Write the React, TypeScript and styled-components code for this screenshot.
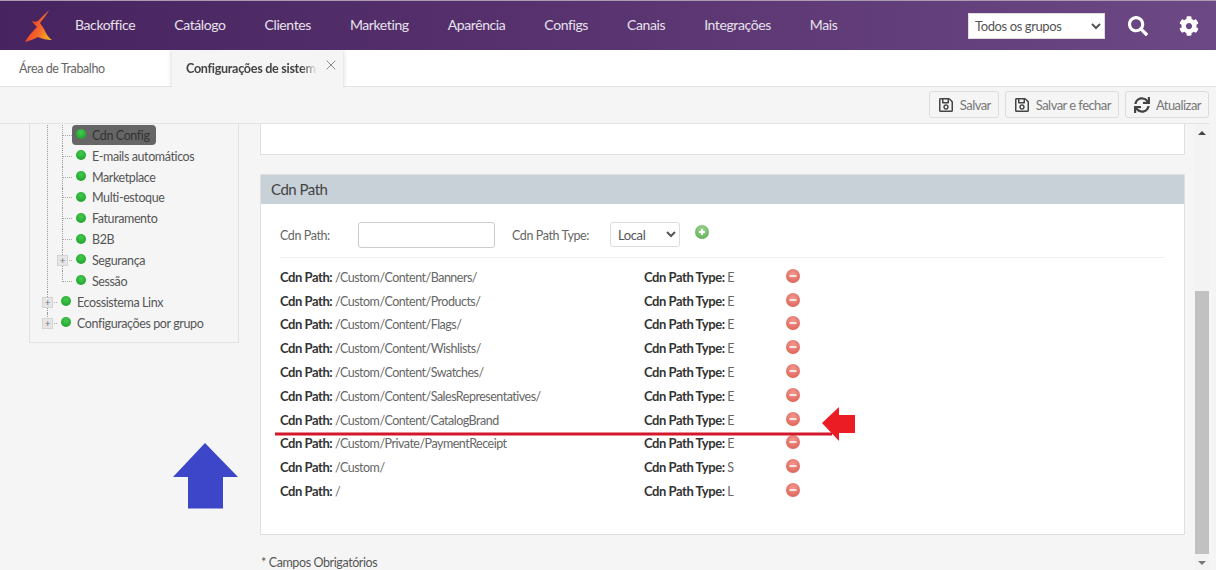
import React from "react";
import styled, { createGlobalStyle } from "styled-components";
import { FaRegSave, FaSync, FaSearch, FaCog } from "react-icons/fa";
import { X } from "lucide-react";

const FONT = `"Lato", "Noto Sans", "Liberation Sans", sans-serif`;

const Global = createGlobalStyle`
  html, body { margin: 0; padding: 0; height: 570px; overflow: hidden; background: #f5f5f5; }
  * { box-sizing: border-box; }
  body { font-family: ${FONT}; font-size: 12.5px; color: #555; }
  body, select, button { letter-spacing: -0.4px; }
`;

const Page = styled.div`
  position: relative;
  width: 1216px;
  height: 570px;
  overflow: hidden;
  display: flex;
  flex-direction: column;
  background: #f5f5f5;
`;

const Header = styled.header`
  height: 50px;
  flex: none;
  display: flex;
  align-items: center;
  padding: 0 17px 0 24px;
  border-top: 1px solid #a99bb4;
  background: linear-gradient(90deg, #47245f 0%, #55306c 40%, #6c4884 100%);
`;

const Logo = styled.svg`
  width: 29px;
  height: 32px;
  flex: none;
`;

const Nav = styled.nav`
  display: flex;
  gap: 39px;
  margin-left: 22px;
  padding-bottom: 2px;
  flex: 1;
`;

const NavItem = styled.span`
  color: #e8e2ec;
  font-size: 14px;
  letter-spacing: -0.4px;
  white-space: nowrap;
`;

const GroupSelect = styled.select`
  width: 137px;
  height: 26px;
  border: 1px solid #ddd;
  background: #fff;
  color: #555;
  font-family: ${FONT};
  font-size: 13px;
  padding-left: 2px;
  border-radius: 0;
`;

const HeaderIcon = styled.span<{ $left: number }>`
  display: flex;
  color: #fff;
  font-size: 20px;
  margin-left: ${(p) => p.$left}px;
`;

const Tabs = styled.div`
  height: 37px;
  flex: none;
  display: flex;
  background: #fff;
  border-bottom: 1px solid #e4e4e4;
`;

const Tab = styled.div`
  width: 172px;
  padding-left: 19px;
  display: flex;
  align-items: center;
  font-size: 12.5px;
  color: #666;
`;

const ActiveTab = styled.div`
  position: relative;
  width: 171px;
  height: 37px;
  padding: 0 0 1px 14px;
  display: flex;
  align-items: center;
  background: #f5f5f5;
  box-shadow: 0 0 5px rgba(0, 0, 0, 0.2);
  clip-path: inset(0 -6px 0 -6px);
`;

const TabTitle = styled.span`
  width: 131px;
  overflow: hidden;
  white-space: nowrap;
  font-weight: 700;
  font-size: 12.6px;
  letter-spacing: -0.3px;
  color: #444;
  mask-image: linear-gradient(90deg, #000 88%, transparent 100%);
`;

const TabClose = styled.span`
  position: absolute;
  right: 4px;
  top: 7px;
  display: flex;
  color: #888;
`;

const Toolbar = styled.div`
  height: 37px;
  flex: none;
  display: flex;
  justify-content: flex-end;
  align-items: center;
  gap: 6px;
  padding: 0 1px 1px 0;
  margin-right: 6px;
  border-bottom: 1px solid #e4e4e4;
`;

const ToolButton = styled.button`
  height: 27px;
  display: flex;
  align-items: center;
  gap: 6px;
  padding: 0 7px 0 8px;
  background: #f5f5f5;
  border: 1px solid #dcdcdc;
  border-radius: 3px;
  color: #777;
  font-family: ${FONT};
  font-size: 13px;
  letter-spacing: -0.55px;
  svg { color: #444; font-size: 16px; flex: none; }
`;

const Body = styled.div`
  flex: 1;
  min-height: 0;
  display: flex;
`;

const Sidebar = styled.aside`
  width: 260px;
  flex: none;
  padding-left: 29px;
`;

const TreePanel = styled.div`
  width: 210px;
  padding: 1px 0 9px 17px;
  border: 1px solid #e2e2e2;
  border-top: 0;
`;

const TreeList = styled.ul<{ $nested?: boolean }>`
  list-style: none;
  margin: 0 0 0 ${(p) => (p.$nested ? 15 : 0)}px;
  padding: 0;
`;

const TreeItem = styled.li`
  position: relative;
  &::before {
    content: "";
    position: absolute;
    left: 0;
    top: 0;
    bottom: 0;
    border-left: 1px dotted #999;
  }
  &:last-child::before { bottom: 10px; }
`;

const TreeRow = styled.div`
  height: 20.85px;
  display: flex;
  align-items: center;
  padding-left: 1px;
`;

const Connector = styled.span`
  width: 9px;
  flex: none;
  border-top: 1px dotted #aaa;
`;

const Expander = styled.span`
  position: absolute;
  left: -5px;
  top: 5px;
  width: 11px;
  height: 11px;
  background: #e6e6e6;
  border: 1px solid #d4d4d4;
  color: #777;
  font-size: 10px;
  line-height: 9px;
  text-align: center;
`;

const TreeNode = styled.span<{ $selected?: boolean }>`
  height: 20px;
  display: flex;
  align-items: center;
  gap: 6px;
  padding: 0 6px 0 4px;
  border-radius: 4px;
  white-space: nowrap;
  font-size: 12.5px;
  color: ${(p) => (p.$selected ? "#333" : "#555")};
  background: ${(p) => (p.$selected ? "#666" : "transparent")};
`;

const Dot = styled.span`
  width: 10px;
  height: 10px;
  margin-top: -2px;
  flex: none;
  border-radius: 50%;
  background: radial-gradient(circle at 50% 35%, #45c94f 0%, #1fa32c 80%);
`;

const Main = styled.main`
  width: 925px;
  flex: none;
  margin-right: 10px;
`;

const TopCard = styled.section`
  height: 31px;
  background: #fff;
  border: 1px solid #e0e0e0;
  border-top: 0;
`;

const PathCard = styled.section`
  height: 361px;
  margin-top: 19px;
  background: #fff;
  border: 1px solid #e0e0e0;
`;

const CardTitle = styled.h2`
  height: 29px;
  margin: 0;
  padding: 0 0 2px 10px;
  display: flex;
  align-items: center;
  background: #c8d0d8;
  color: #444;
  font-size: 15px;
  letter-spacing: -0.5px;
  font-weight: 400;
`;

const FormRow = styled.div`
  margin: 0 19px;
  height: 54px;
  padding-top: 18px;
  display: flex;
  align-items: flex-start;
  border-bottom: 1px solid #f0f0f0;
`;

const FieldLabel = styled.label<{ $width: number }>`
  width: ${(p) => p.$width}px;
  flex: none;
  line-height: 28px;
  font-size: 12.5px;
  color: #666;
`;

const TextInput = styled.input`
  width: 137px;
  height: 26px;
  margin-right: 17px;
  border: 1px solid #ccc;
  border-radius: 3px;
  background: #fff;
`;

const TypeSelect = styled.select`
  width: 70px;
  height: 25px;
  padding-left: 3px;
  border: 1px solid #ddd;
  border-radius: 3px;
  background: #fff;
  color: #555;
  font-family: ${FONT};
  font-size: 13px;
`;

const AddIcon = styled.svg`
  width: 14px;
  height: 14px;
  margin: 3px 0 0 15px;
`;

const PathList = styled.div`
  margin-top: 8px;
  padding-left: 19px;
`;

const PathRow = styled.div`
  height: 23.8px;
  display: grid;
  grid-template-columns: 364px 142px 14px;
  align-items: center;
  font-size: 12.5px;
  letter-spacing: -0.5px;
  color: #666;
  span { padding-bottom: 2px; }
  b { color: #333; font-size: 13px; font-weight: 700; letter-spacing: -0.45px; }
`;

const RemoveIcon = styled.svg`
  width: 14px;
  height: 14px;
  margin-top: -4px;
`;

const Note = styled.p`
  margin: 20px 0 0 1px;
  font-size: 12.5px;
  color: #555;
`;

const Scrollbar = styled.div`
  width: 14px;
  flex: none;
  display: flex;
  flex-direction: column;
  background: #f3f3f3;
`;

const ScrollArrow = styled.span<{ $down?: boolean }>`
  height: 17px;
  flex: none;
  display: flex;
  align-items: center;
  justify-content: center;
  &::after {
    content: "";
    border-left: 4px solid transparent;
    border-right: 4px solid transparent;
    ${(p) => (p.$down ? "border-top: 4px solid #777;" : "border-bottom: 4px solid #444;")}
  }
`;

const ScrollSpace = styled.div`
  height: 150px;
  flex: none;
`;

const ScrollThumb = styled.div`
  height: 263px;
  flex: none;
  background: #c1c1c1;
`;

const Overlay = styled.svg`
  position: absolute;
  left: 0;
  top: 0;
  width: 1216px;
  height: 570px;
  pointer-events: none;
`;

const NAV = ["Backoffice", "Catálogo", "Clientes", "Marketing", "Aparência", "Configs", "Canais", "Integrações", "Mais"];

const PATHS: [string, string][] = [
  ["/Custom/Content/Banners/", "E"],
  ["/Custom/Content/Products/", "E"],
  ["/Custom/Content/Flags/", "E"],
  ["/Custom/Content/Wishlists/", "E"],
  ["/Custom/Content/Swatches/", "E"],
  ["/Custom/Content/SalesRepresentatives/", "E"],
  ["/Custom/Content/CatalogBrand", "E"],
  ["/Custom/Private/PaymentReceipt", "E"],
  ["/Custom/", "S"],
  ["/", "L"],
];

const SUB: { label: string; selected?: boolean; expand?: boolean }[] = [
  { label: "Cdn Config", selected: true },
  { label: "E-mails automáticos" },
  { label: "Marketplace" },
  { label: "Multi-estoque" },
  { label: "Faturamento" },
  { label: "B2B" },
  { label: "Segurança", expand: true },
  { label: "Sessão" },
];

function Node({ label, selected, expand }: { label: string; selected?: boolean; expand?: boolean }) {
  return (
    <TreeItem>
      <TreeRow>
        <Connector />
        {expand && <Expander>+</Expander>}
        <TreeNode $selected={selected}>
          <Dot />
          {label}
        </TreeNode>
      </TreeRow>
    </TreeItem>
  );
}

export default function App() {
  return (
    <Page>
      <Global />
      <Header>
        <Logo viewBox="0 0 29 32">
          <defs>
            <linearGradient id="lg" x1="0" y1="0.3" x2="1" y2="0.8">
              <stop offset="0" stopColor="#ee2f2a" />
              <stop offset="0.55" stopColor="#f4652a" />
              <stop offset="1" stopColor="#f7b820" />
            </linearGradient>
          </defs>
          <path d="M25 0 C22 6 18 10 16 13 L20 19 C22 24 25 28 28 30 C23 30 18 29 14 27 C10 29 5 31 1 32 C4 26 9 21 13 17 C11 15 9 13 8 11 C11 12 13 12 15 10 C18 7 22 3 25 0 Z" fill="url(#lg)" />
        </Logo>
        <Nav>
          {NAV.map((n) => (
            <NavItem key={n}>{n}</NavItem>
          ))}
        </Nav>
        <GroupSelect defaultValue="Todos os grupos">
          <option>Todos os grupos</option>
        </GroupSelect>
        <HeaderIcon $left={23}>
          <FaSearch />
        </HeaderIcon>
        <HeaderIcon $left={31}>
          <FaCog />
        </HeaderIcon>
      </Header>

      <Tabs>
        <Tab>Área de Trabalho</Tab>
        <ActiveTab>
          <TabTitle>Configurações de sistema</TabTitle>
          <TabClose>
            <X size={16} strokeWidth={1.5} />
          </TabClose>
        </ActiveTab>
      </Tabs>

      <Toolbar>
        <ToolButton>
          <FaRegSave />
          Salvar
        </ToolButton>
        <ToolButton>
          <FaRegSave />
          Salvar e fechar
        </ToolButton>
        <ToolButton>
          <FaSync />
          Atualizar
        </ToolButton>
      </Toolbar>

      <Body>
        <Sidebar>
          <TreePanel>
            <TreeList>
              <TreeItem>
                <TreeList $nested>
                  {SUB.map((s) => (
                    <Node key={s.label} {...s} />
                  ))}
                </TreeList>
              </TreeItem>
              <Node label="Ecossistema Linx" expand />
              <Node label="Configurações por grupo" expand />
            </TreeList>
          </TreePanel>
        </Sidebar>

        <Main>
          <TopCard />
          <PathCard>
            <CardTitle>Cdn Path</CardTitle>
            <FormRow>
              <FieldLabel $width={78}>Cdn Path:</FieldLabel>
              <TextInput />
              <FieldLabel $width={98}>Cdn Path Type:</FieldLabel>
              <TypeSelect defaultValue="Local">
                <option>Local</option>
              </TypeSelect>
              <AddIcon viewBox="0 0 14 14">
                <defs>
                  <radialGradient id="ga" cx="0.5" cy="0.35" r="0.7">
                    <stop offset="0" stopColor="#a5d89c" />
                    <stop offset="1" stopColor="#5cae50" />
                  </radialGradient>
                </defs>
                <circle cx="7" cy="7" r="7" fill="url(#ga)" />
                <path d="M7 4v6M4 7h6" stroke="#fff" strokeWidth="1.8" />
              </AddIcon>
            </FormRow>
            <PathList>
              {PATHS.map(([p, t]) => (
                <PathRow key={p}>
                  <span>
                    <b>Cdn Path:</b> {p}
                  </span>
                  <span>
                    <b>Cdn Path Type:</b> {t}
                  </span>
                  <RemoveIcon viewBox="0 0 14 14">
                    <defs>
                      <radialGradient id="gr" cx="0.5" cy="0.35" r="0.7">
                        <stop offset="0" stopColor="#f19a90" />
                        <stop offset="1" stopColor="#de5f55" />
                      </radialGradient>
                    </defs>
                    <circle cx="7" cy="7" r="7" fill="url(#gr)" />
                    <path d="M3.500 7h7" stroke="#f6f0ee" strokeWidth="1.8" />
                  </RemoveIcon>
                </PathRow>
              ))}
            </PathList>
          </PathCard>
          <Note>* Campos Obrigatórios</Note>
        </Main>

        <Scrollbar>
          <ScrollArrow />
          <ScrollSpace />
          <ScrollThumb />
          <ScrollArrow $down />
        </Scrollbar>
      </Body>

      <Overlay viewBox="0 0 1216 570">
        <path d="M205 443 L238 477 H223 V508.500 H188 V477 H173 Z" fill="#3d46c8" />
        <path d="M275 434 H832" stroke="#d3182b" strokeWidth="3" fill="none" />
        <path d="M822 423 L839 407 V415 H855 V433 H839 V441 Z" fill="#ec1c24" />
      </Overlay>
    </Page>
  );
}
